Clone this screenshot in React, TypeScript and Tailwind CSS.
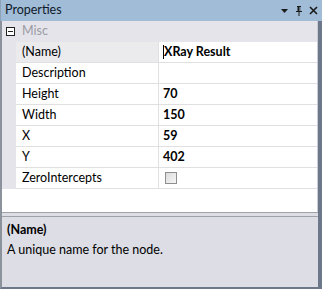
const rows = [
  { name: '(Name)', value: 'XRay Result', selected: true },
  { name: 'Description', value: '' },
  { name: 'Height', value: '70' },
  { name: 'Width', value: '150' },
  { name: 'X', value: '59' },
  { name: 'Y', value: '402' },
  { name: 'ZeroIntercepts', value: '', check: true },
];

export default function App() {
  return (
    <div
      className="w-[322px] h-[289px] flex flex-col bg-white text-[12px] text-black overflow-hidden"
      style={{ fontFamily: 'Lato, "Noto Sans", sans-serif' }}
    >
      {/* title bar */}
      <div className="h-[21px] shrink-0 flex items-center bg-[#a1bcd7] border-l border-[#8ea2b8] pl-[4px] pr-[4px]">
        <span className="text-[#0f1a2a] leading-none text-[12.5px]">Properties</span>
        <div className="ml-auto flex items-center gap-[5px]">
          <svg width="7" height="4" viewBox="0 0 7 4"><path d="M0 0h7L3.5 4z" fill="#1a1a1a" /></svg>
          <svg width="8" height="10" viewBox="0 0 8 10" className="ml-[2px]">
            <path d="M2 0h4v1H5.5v4H7v1H4.5v4h-1V6H1V5h1.5V1H2z" fill="#1a1a1a" />
            <path d="M4.5 1h1v4h-1z" fill="#a1bcd7" />
          </svg>
          <svg width="9" height="9" viewBox="0 0 9 9" className="ml-[1px]">
            <path d="M1 1l7 7M8 1L1 8" stroke="#1a1a1a" strokeWidth="1.6" />
          </svg>
        </div>
      </div>

      {/* body */}
      <div className="flex-1 flex flex-col border-l-2 border-r-4 border-b-2 border-l-[#8b929c] border-r-[#6c7889] border-b-[#6c7889]">
        <div className="flex-1 flex flex-col border-r border-[#c9ccd4]">
          {/* category */}
          <div className="h-[21px] flex items-center bg-[#e4e4ea]">
            <div className="w-[16px] flex justify-center">
              <svg width="9" height="9" viewBox="0 0 9 9">
                <rect x="0.5" y="0.5" width="8" height="8" fill="#fff" stroke="#222" />
                <path d="M2 4.5h5" stroke="#222" />
              </svg>
            </div>
            <span className="pl-[4px] text-[#9b9ba3] text-[12.5px]">Misc</span>
          </div>

          {rows.map((r) => (
            <div key={r.name} className="h-[21px] flex bg-[#e4e4ea] text-[12.5px]">
              <div className="w-[14px] shrink-0" />
              <div
                className={`w-[143px] shrink-0 flex items-center pl-[6px] border-b border-r border-[#e0e0e3] ${
                  r.selected ? 'bg-[#ebebee]' : 'bg-white'
                }`}
              >
                {r.name}
              </div>
              <div className="flex-1 flex items-center pl-[4px] bg-white border-b border-[#e0e0e3] font-bold">
                {r.selected && <span className="w-px h-[14px] bg-black" />}
                {r.check ? (
                  <span className="w-[12px] h-[12px] border border-[#8f8f8f] bg-gradient-to-br from-[#dcdcdc] to-[#f6f6f6] ml-[2px]" />
                ) : (
                  <span>{r.value}</span>
                )}
              </div>
            </div>
          ))}

          <div className="flex-1 bg-white" />
        </div>

        {/* splitter */}
        <div className="h-[5px] shrink-0 border-t border-b border-[#9ea2aa] bg-[#dcdde5]" />

        {/* description */}
        <div className="h-[70px] shrink-0 bg-[#dcdde5] px-[5px] pt-[3px] leading-[20px] text-[12.5px]">
          <div className="font-bold">(Name)</div>
          <div>A unique name for the node.</div>
        </div>
      </div>
    </div>
  );
}
